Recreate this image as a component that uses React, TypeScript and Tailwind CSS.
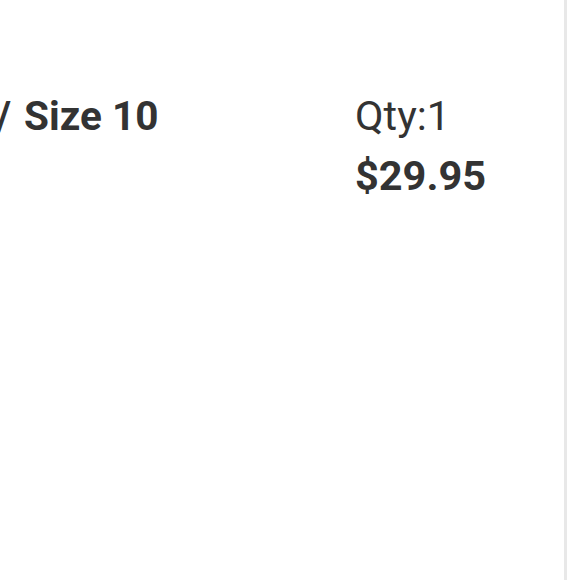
export default function App() {
  return (
    <div className="w-[580px] h-[580px] bg-white flex overflow-hidden font-['Roboto',sans-serif] text-[#333333]">
      <div className="w-[567px] h-full shrink-0 border-r-[3px] border-[#e8e8e8] flex items-start pt-[92px]">
        <div className="w-[355px] shrink-0 pr-4">
          <p className="text-[40.5px] leading-[48px] font-bold whitespace-nowrap">
            <span className="-ml-[4px] mr-[3px]">/</span> Size 10
          </p>
        </div>
        <div className="flex flex-col">
          <span className="text-[41.5px] leading-[48px]">Qty:1</span>
          <span className="text-[41.5px] leading-[48px] font-bold mt-[12px]">$29.95</span>
        </div>
      </div>
      <div className="flex-1 bg-white" />
    </div>
  );
}
